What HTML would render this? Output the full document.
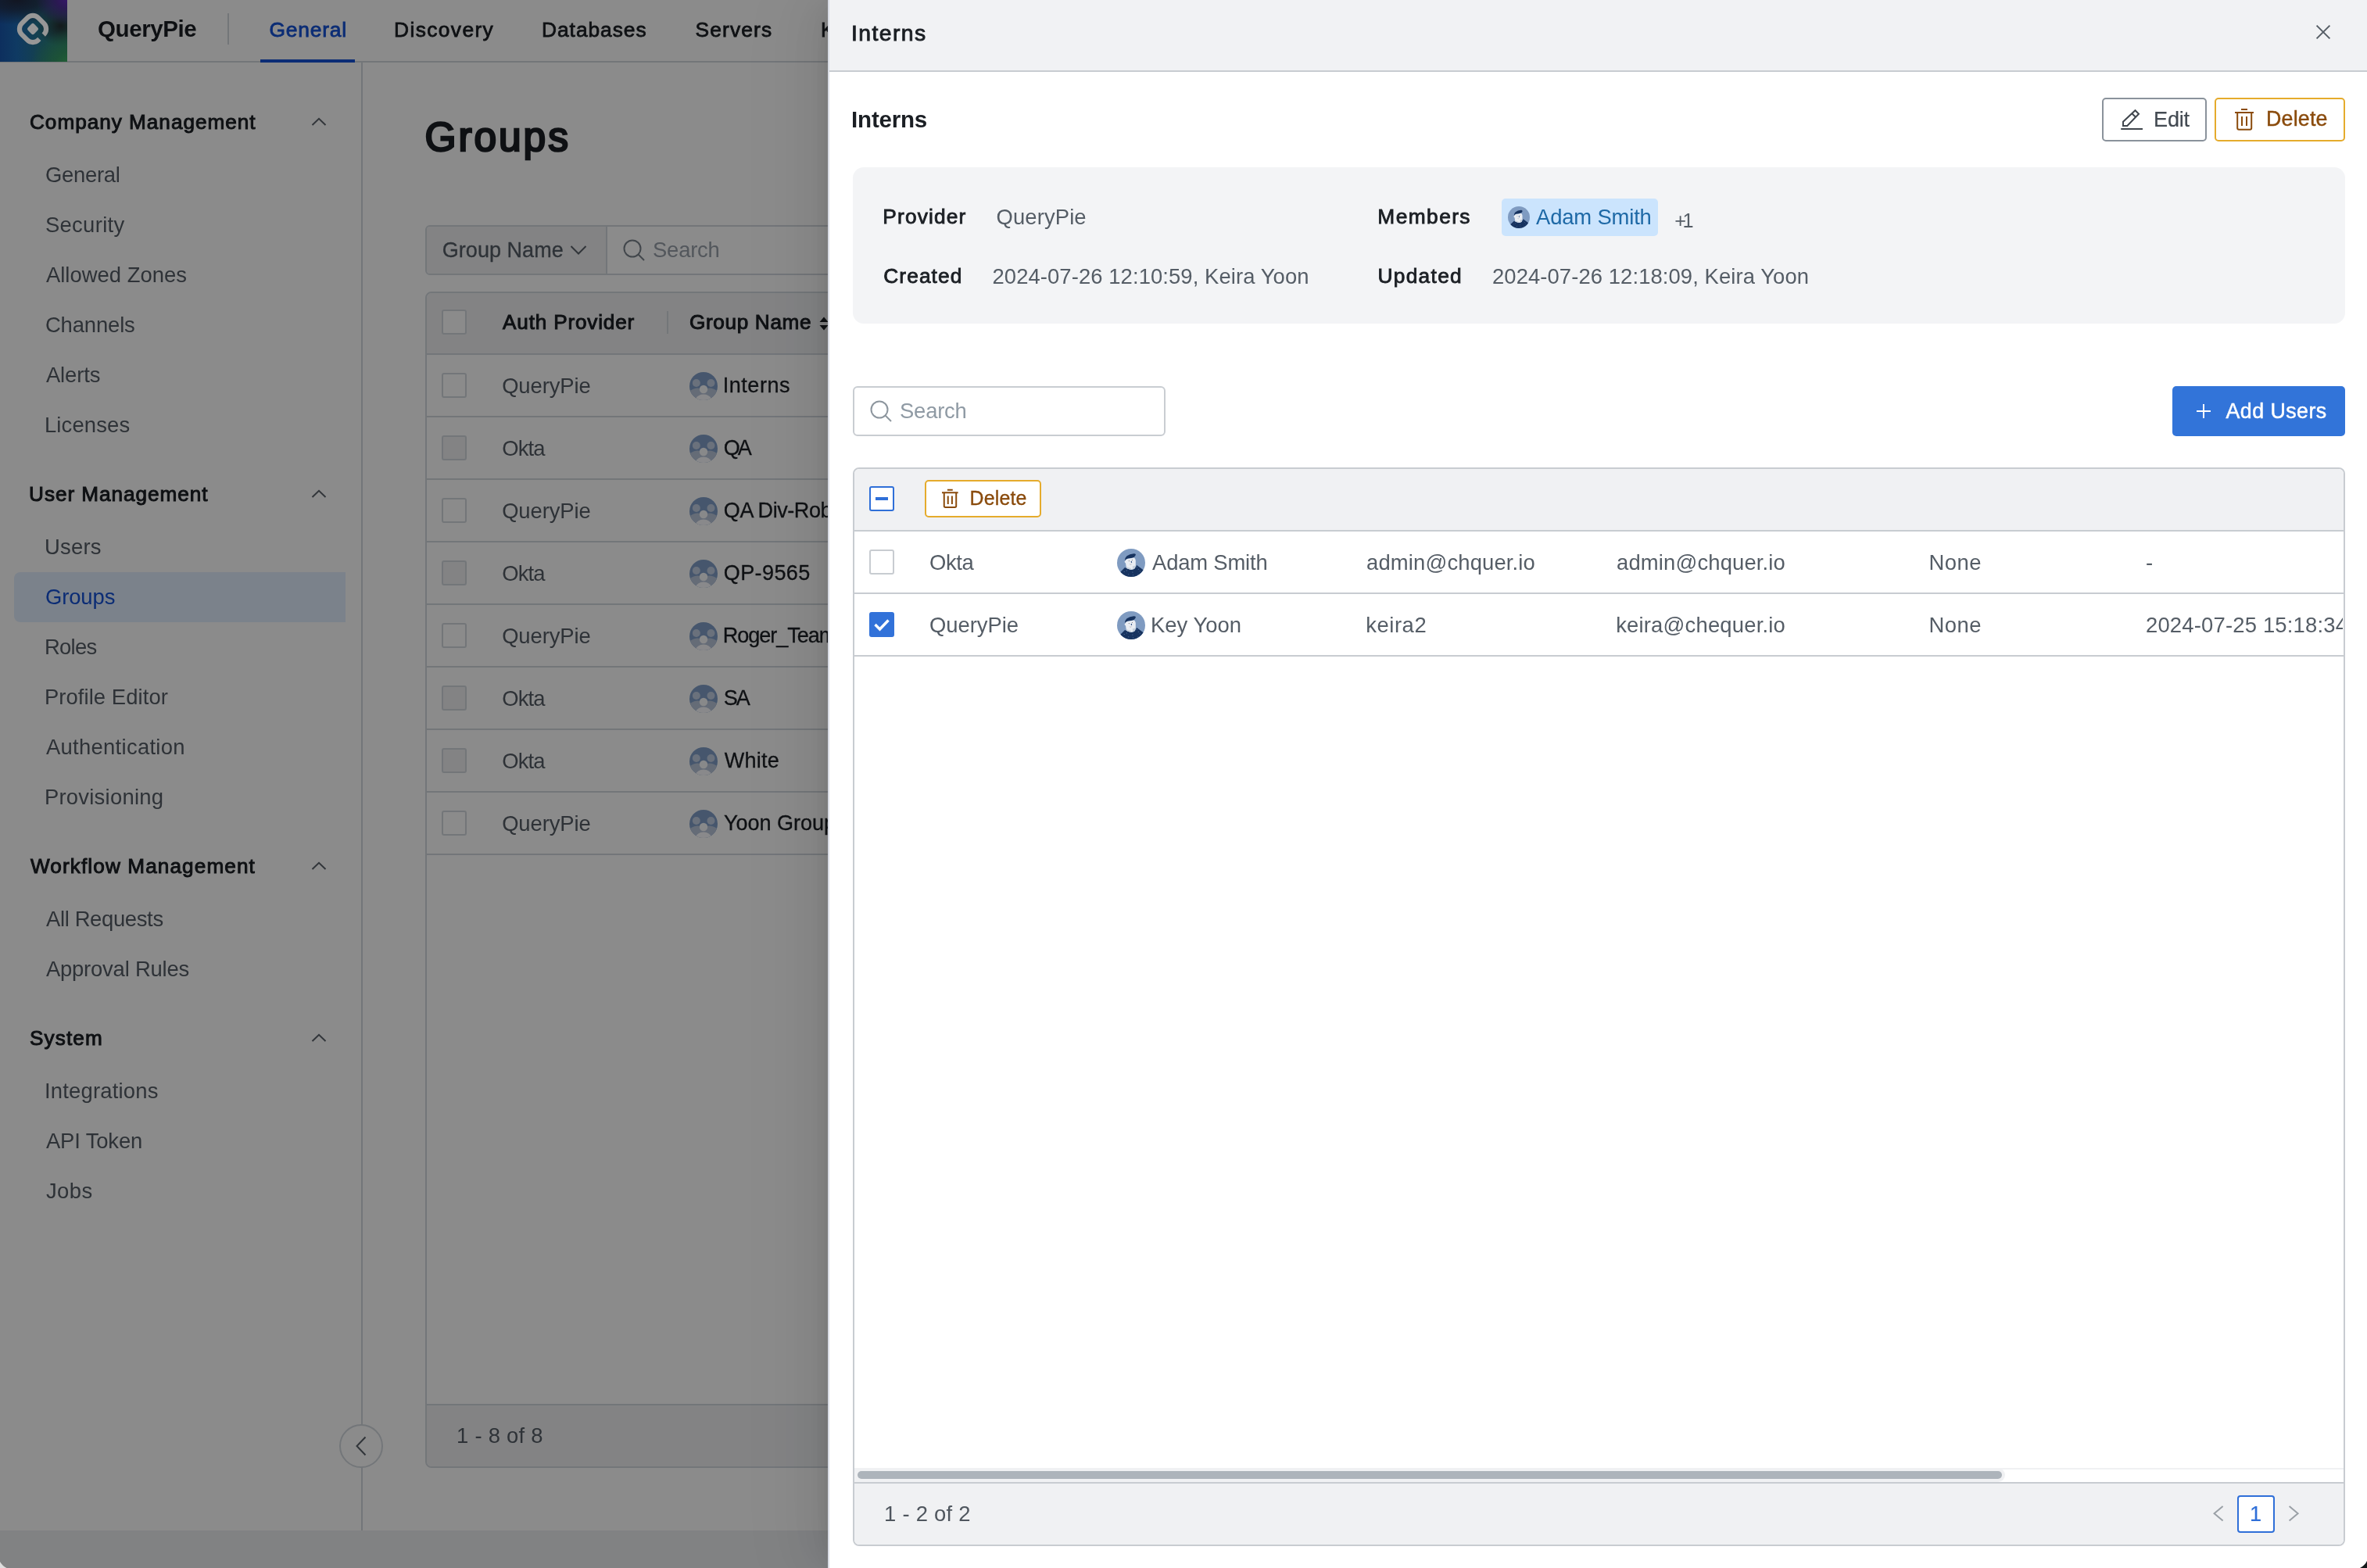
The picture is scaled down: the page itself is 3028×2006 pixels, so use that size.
<!DOCTYPE html>
<html><head><meta charset="utf-8"><title>QueryPie - Groups</title>
<style>
html,body{margin:0;padding:0;}
body{width:3028px;height:2006px;background:#fff;font-family:"Liberation Sans", sans-serif;}
#root{position:relative;width:3028px;height:2006px;overflow:hidden;background:#fff;}
.t{position:absolute;white-space:nowrap;line-height:40px;height:40px;font-family:"Liberation Sans", sans-serif;-webkit-font-smoothing:antialiased;}
#page,#drawer .in{will-change:transform;}
#page{position:absolute;left:0;top:0;width:3028px;height:2006px;overflow:hidden;background:#fff;}
#mask{position:absolute;left:0;top:0;width:3028px;height:2006px;background:rgba(0,0,0,0.455);}
#drawer{position:absolute;left:1060px;top:0;width:1968px;height:2006px;background:#fff;overflow:hidden;box-shadow:-10px 0 30px -14px rgba(0,0,0,.12), -18px 0 56px 0 rgba(0,0,0,.07), -24px 0 96px 32px rgba(0,0,0,.04);}
#drawer .in{position:absolute;left:-1060px;top:0;width:3028px;height:2006px;}
svg{position:absolute;overflow:visible;}
</style></head><body>
<div id="root">
<div id="page">
<div style="position:absolute;left:0px;top:78px;width:3028px;height:2px;background:#d3d9df"></div>
<div style="position:absolute;left:291px;top:17px;width:2px;height:40px;background:#d3d9df"></div>
<div style="position:absolute;left:333px;top:76px;width:121px;height:4px;background:#1552d6"></div>
<div style="position:absolute;left:462px;top:80px;width:2px;height:1878px;background:#d3d9df"></div>
<svg style="left:397.5px;top:150px" width="20" height="12" viewBox="0 0 20 12"><path d="M1.5 10 L10 1.8 L18.5 10" fill="none" stroke="#5a616a" stroke-width="2"/></svg>
<svg style="left:397.5px;top:626px" width="20" height="12" viewBox="0 0 20 12"><path d="M1.5 10 L10 1.8 L18.5 10" fill="none" stroke="#5a616a" stroke-width="2"/></svg>
<div style="position:absolute;left:18px;top:732.0px;width:424px;height:64px;background:#e2eeff;border-radius:8px 0 0 8px"></div>
<svg style="left:397.5px;top:1102px" width="20" height="12" viewBox="0 0 20 12"><path d="M1.5 10 L10 1.8 L18.5 10" fill="none" stroke="#5a616a" stroke-width="2"/></svg>
<svg style="left:397.5px;top:1322px" width="20" height="12" viewBox="0 0 20 12"><path d="M1.5 10 L10 1.8 L18.5 10" fill="none" stroke="#5a616a" stroke-width="2"/></svg>
<div style="position:absolute;left:544px;top:288px;width:2600px;height:64px;border:2px solid #d3d9df;border-radius:6px;box-sizing:border-box;background:#fff"></div>
<div style="position:absolute;left:546px;top:290px;width:229px;height:60px;background:#f0f1f3;border-right:2px solid #d3d9df;border-radius:4px 0 0 4px"></div>
<svg style="left:729.3px;top:313px" width="22" height="14" viewBox="0 0 22 14"><path d="M1.5 2 L11 11.5 L20.5 2" fill="none" stroke="#5a616a" stroke-width="2"/></svg>
<svg style="left:796px;top:305px" width="30" height="30" viewBox="0 0 30 30"><circle cx="13" cy="13" r="10.5" fill="none" stroke="#7a828b" stroke-width="2"/><path d="M20.5 20.5 L28 28" stroke="#7a828b" stroke-width="2" fill="none"/></svg>
<div style="position:absolute;left:544px;top:373px;width:2600px;height:1505px;border:2px solid #d3d9df;border-radius:8px;box-sizing:border-box;background:#fff"></div>
<div style="position:absolute;left:546px;top:375px;width:2600px;height:77px;background:#f0f1f3;border-radius:6px 0 0 0"></div>
<div style="position:absolute;left:546px;top:452px;width:2600px;height:2px;background:#d3d9df"></div>
<div style="position:absolute;left:565px;top:396px;width:32px;height:32px;box-sizing:border-box;border:2px solid #d3d9df;border-radius:3px;background:#fff"></div>
<div style="position:absolute;left:853px;top:398px;width:2px;height:29px;background:#d3d9df"></div>
<svg style="left:1048px;top:405px" width="12" height="18" viewBox="0 0 12 18"><path d="M6 0.5 L11.5 7 L0.5 7 Z M0.5 11 L11.5 11 L6 17.5 Z" fill="#1b1f24"/></svg>
<div style="position:absolute;left:546px;top:532px;width:2600px;height:2px;background:#d3d9df"></div>
<div style="position:absolute;left:565px;top:477px;width:32px;height:32px;box-sizing:border-box;border:2px solid #d3d9df;border-radius:3px;background:#fff"></div>
<svg style="left:882px;top:476px" width="36" height="36" viewBox="0 0 36 36"><defs><clipPath id="gc"><circle cx="18" cy="18" r="18"/></clipPath></defs><g clip-path="url(#gc)"><rect width="36" height="36" fill="#809fc8"/><circle cx="8.8" cy="14" r="5" fill="#c2cfe4"/><circle cx="27.5" cy="14" r="5" fill="#c2cfe4"/><path d="M-2 36 L-2 26 Q9 17 18 23 Q27 17 38 26 L38 36 Z" fill="#bac6da"/><circle cx="18" cy="22" r="5.2" fill="#fafbfe"/><path d="M7 36 Q10 28.5 18 28.5 Q26 28.5 29 36 Z" fill="#fbfcff"/></g></svg>
<div style="position:absolute;left:546px;top:612px;width:2600px;height:2px;background:#d3d9df"></div>
<div style="position:absolute;left:565px;top:557px;width:32px;height:32px;box-sizing:border-box;border:2px solid #d3d9df;border-radius:3px;background:#f0f1f3"></div>
<svg style="left:882px;top:556px" width="36" height="36" viewBox="0 0 36 36"><defs><clipPath id="gc"><circle cx="18" cy="18" r="18"/></clipPath></defs><g clip-path="url(#gc)"><rect width="36" height="36" fill="#809fc8"/><circle cx="8.8" cy="14" r="5" fill="#c2cfe4"/><circle cx="27.5" cy="14" r="5" fill="#c2cfe4"/><path d="M-2 36 L-2 26 Q9 17 18 23 Q27 17 38 26 L38 36 Z" fill="#bac6da"/><circle cx="18" cy="22" r="5.2" fill="#fafbfe"/><path d="M7 36 Q10 28.5 18 28.5 Q26 28.5 29 36 Z" fill="#fbfcff"/></g></svg>
<div style="position:absolute;left:546px;top:692px;width:2600px;height:2px;background:#d3d9df"></div>
<div style="position:absolute;left:565px;top:637px;width:32px;height:32px;box-sizing:border-box;border:2px solid #d3d9df;border-radius:3px;background:#fff"></div>
<svg style="left:882px;top:636px" width="36" height="36" viewBox="0 0 36 36"><defs><clipPath id="gc"><circle cx="18" cy="18" r="18"/></clipPath></defs><g clip-path="url(#gc)"><rect width="36" height="36" fill="#809fc8"/><circle cx="8.8" cy="14" r="5" fill="#c2cfe4"/><circle cx="27.5" cy="14" r="5" fill="#c2cfe4"/><path d="M-2 36 L-2 26 Q9 17 18 23 Q27 17 38 26 L38 36 Z" fill="#bac6da"/><circle cx="18" cy="22" r="5.2" fill="#fafbfe"/><path d="M7 36 Q10 28.5 18 28.5 Q26 28.5 29 36 Z" fill="#fbfcff"/></g></svg>
<div style="position:absolute;left:546px;top:772px;width:2600px;height:2px;background:#d3d9df"></div>
<div style="position:absolute;left:565px;top:717px;width:32px;height:32px;box-sizing:border-box;border:2px solid #d3d9df;border-radius:3px;background:#f0f1f3"></div>
<svg style="left:882px;top:716px" width="36" height="36" viewBox="0 0 36 36"><defs><clipPath id="gc"><circle cx="18" cy="18" r="18"/></clipPath></defs><g clip-path="url(#gc)"><rect width="36" height="36" fill="#809fc8"/><circle cx="8.8" cy="14" r="5" fill="#c2cfe4"/><circle cx="27.5" cy="14" r="5" fill="#c2cfe4"/><path d="M-2 36 L-2 26 Q9 17 18 23 Q27 17 38 26 L38 36 Z" fill="#bac6da"/><circle cx="18" cy="22" r="5.2" fill="#fafbfe"/><path d="M7 36 Q10 28.5 18 28.5 Q26 28.5 29 36 Z" fill="#fbfcff"/></g></svg>
<div style="position:absolute;left:546px;top:852px;width:2600px;height:2px;background:#d3d9df"></div>
<div style="position:absolute;left:565px;top:797px;width:32px;height:32px;box-sizing:border-box;border:2px solid #d3d9df;border-radius:3px;background:#fff"></div>
<svg style="left:882px;top:796px" width="36" height="36" viewBox="0 0 36 36"><defs><clipPath id="gc"><circle cx="18" cy="18" r="18"/></clipPath></defs><g clip-path="url(#gc)"><rect width="36" height="36" fill="#809fc8"/><circle cx="8.8" cy="14" r="5" fill="#c2cfe4"/><circle cx="27.5" cy="14" r="5" fill="#c2cfe4"/><path d="M-2 36 L-2 26 Q9 17 18 23 Q27 17 38 26 L38 36 Z" fill="#bac6da"/><circle cx="18" cy="22" r="5.2" fill="#fafbfe"/><path d="M7 36 Q10 28.5 18 28.5 Q26 28.5 29 36 Z" fill="#fbfcff"/></g></svg>
<div style="position:absolute;left:546px;top:932px;width:2600px;height:2px;background:#d3d9df"></div>
<div style="position:absolute;left:565px;top:877px;width:32px;height:32px;box-sizing:border-box;border:2px solid #d3d9df;border-radius:3px;background:#f0f1f3"></div>
<svg style="left:882px;top:876px" width="36" height="36" viewBox="0 0 36 36"><defs><clipPath id="gc"><circle cx="18" cy="18" r="18"/></clipPath></defs><g clip-path="url(#gc)"><rect width="36" height="36" fill="#809fc8"/><circle cx="8.8" cy="14" r="5" fill="#c2cfe4"/><circle cx="27.5" cy="14" r="5" fill="#c2cfe4"/><path d="M-2 36 L-2 26 Q9 17 18 23 Q27 17 38 26 L38 36 Z" fill="#bac6da"/><circle cx="18" cy="22" r="5.2" fill="#fafbfe"/><path d="M7 36 Q10 28.5 18 28.5 Q26 28.5 29 36 Z" fill="#fbfcff"/></g></svg>
<div style="position:absolute;left:546px;top:1012px;width:2600px;height:2px;background:#d3d9df"></div>
<div style="position:absolute;left:565px;top:957px;width:32px;height:32px;box-sizing:border-box;border:2px solid #d3d9df;border-radius:3px;background:#f0f1f3"></div>
<svg style="left:882px;top:956px" width="36" height="36" viewBox="0 0 36 36"><defs><clipPath id="gc"><circle cx="18" cy="18" r="18"/></clipPath></defs><g clip-path="url(#gc)"><rect width="36" height="36" fill="#809fc8"/><circle cx="8.8" cy="14" r="5" fill="#c2cfe4"/><circle cx="27.5" cy="14" r="5" fill="#c2cfe4"/><path d="M-2 36 L-2 26 Q9 17 18 23 Q27 17 38 26 L38 36 Z" fill="#bac6da"/><circle cx="18" cy="22" r="5.2" fill="#fafbfe"/><path d="M7 36 Q10 28.5 18 28.5 Q26 28.5 29 36 Z" fill="#fbfcff"/></g></svg>
<div style="position:absolute;left:546px;top:1092px;width:2600px;height:2px;background:#d3d9df"></div>
<div style="position:absolute;left:565px;top:1037px;width:32px;height:32px;box-sizing:border-box;border:2px solid #d3d9df;border-radius:3px;background:#fff"></div>
<svg style="left:882px;top:1036px" width="36" height="36" viewBox="0 0 36 36"><defs><clipPath id="gc"><circle cx="18" cy="18" r="18"/></clipPath></defs><g clip-path="url(#gc)"><rect width="36" height="36" fill="#809fc8"/><circle cx="8.8" cy="14" r="5" fill="#c2cfe4"/><circle cx="27.5" cy="14" r="5" fill="#c2cfe4"/><path d="M-2 36 L-2 26 Q9 17 18 23 Q27 17 38 26 L38 36 Z" fill="#bac6da"/><circle cx="18" cy="22" r="5.2" fill="#fafbfe"/><path d="M7 36 Q10 28.5 18 28.5 Q26 28.5 29 36 Z" fill="#fbfcff"/></g></svg>
<div style="position:absolute;left:546px;top:1796px;width:2600px;height:2px;background:#d3d9df"></div>
<div style="position:absolute;left:546px;top:1798px;width:2600px;height:78px;background:#f0f1f3;border-radius:0 0 0 6px"></div>
<div style="position:absolute;left:434px;top:1822px;width:56px;height:56px;box-sizing:border-box;border:2px solid #d3d9df;border-radius:28px;background:#fff"></div>
<svg style="left:454px;top:1837px" width="16" height="26" viewBox="0 0 16 26"><path d="M13.5 1.5 L2.5 13 L13.5 24.5" fill="none" stroke="#5a616a" stroke-width="2"/></svg>
<div style="position:absolute;left:0px;top:1958px;width:3028px;height:48px;background:#eceef1"></div>
<div class="t" style="left:125.04px;top:17px;font-size:29.54px;font-weight:700;color:#1b1f24;letter-spacing:-0.438px;">QueryPie</div>
<div class="t" style="left:344.51px;top:18px;font-size:26.39px;font-weight:400;color:#1552d6;letter-spacing:0.793px;-webkit-text-stroke:0.8px #1552d6;">General</div>
<div class="t" style="left:504.06px;top:18px;font-size:26.39px;font-weight:400;color:#1b1f24;letter-spacing:1.366px;-webkit-text-stroke:0.8px #1b1f24;">Discovery</div>
<div class="t" style="left:693.06px;top:18px;font-size:26.39px;font-weight:400;color:#1b1f24;letter-spacing:0.930px;-webkit-text-stroke:0.8px #1b1f24;">Databases</div>
<div class="t" style="left:889.51px;top:18px;font-size:26.39px;font-weight:400;color:#1b1f24;letter-spacing:1.142px;-webkit-text-stroke:0.8px #1b1f24;">Servers</div>
<div class="t" style="left:1050.06px;top:18px;font-size:26.39px;font-weight:400;color:#1b1f24;letter-spacing:0.350px;-webkit-text-stroke:0.8px #1b1f24;">Kubernetes</div>
<div class="t" style="left:38.01px;top:136px;font-size:26.13px;font-weight:400;color:#1b1f24;letter-spacing:0.999px;-webkit-text-stroke:1.0px #1b1f24;">Company Management</div>
<div class="t" style="left:57.91px;top:204px;font-size:27.43px;font-weight:400;color:#555d66;letter-spacing:-0.263px;">General</div>
<div class="t" style="left:57.91px;top:268px;font-size:27.43px;font-weight:400;color:#555d66;letter-spacing:0.318px;">Security</div>
<div class="t" style="left:58.94px;top:332px;font-size:27.43px;font-weight:400;color:#555d66;letter-spacing:0.010px;">Allowed Zones</div>
<div class="t" style="left:57.91px;top:396px;font-size:27.43px;font-weight:400;color:#555d66;letter-spacing:-0.136px;">Channels</div>
<div class="t" style="left:58.94px;top:460px;font-size:27.43px;font-weight:400;color:#555d66;letter-spacing:-0.107px;">Alerts</div>
<div class="t" style="left:56.94px;top:524px;font-size:27.43px;font-weight:400;color:#555d66;letter-spacing:0.152px;">Licenses</div>
<div class="t" style="left:37.09px;top:612px;font-size:26.13px;font-weight:400;color:#1b1f24;letter-spacing:0.967px;-webkit-text-stroke:1.0px #1b1f24;">User Management</div>
<div class="t" style="left:56.97px;top:680px;font-size:27.43px;font-weight:400;color:#555d66;letter-spacing:0.245px;">Users</div>
<div class="t" style="left:57.91px;top:744px;font-size:27.43px;font-weight:400;color:#1552d6;letter-spacing:-0.091px;">Groups</div>
<div class="t" style="left:56.94px;top:808px;font-size:27.43px;font-weight:400;color:#555d66;letter-spacing:-0.734px;">Roles</div>
<div class="t" style="left:56.94px;top:872px;font-size:27.43px;font-weight:400;color:#555d66;letter-spacing:0.074px;">Profile Editor</div>
<div class="t" style="left:58.94px;top:936px;font-size:27.43px;font-weight:400;color:#555d66;letter-spacing:0.294px;">Authentication</div>
<div class="t" style="left:56.94px;top:1000px;font-size:27.43px;font-weight:400;color:#555d66;letter-spacing:0.242px;">Provisioning</div>
<div class="t" style="left:39.04px;top:1088px;font-size:26.13px;font-weight:400;color:#1b1f24;letter-spacing:1.119px;-webkit-text-stroke:1.0px #1b1f24;">Workflow Management</div>
<div class="t" style="left:58.94px;top:1156px;font-size:27.43px;font-weight:400;color:#555d66;letter-spacing:-0.343px;">All Requests</div>
<div class="t" style="left:58.94px;top:1220px;font-size:27.43px;font-weight:400;color:#555d66;letter-spacing:-0.206px;">Approval Rules</div>
<div class="t" style="left:38.01px;top:1308px;font-size:26.13px;font-weight:400;color:#1b1f24;letter-spacing:1.118px;-webkit-text-stroke:1.0px #1b1f24;">System</div>
<div class="t" style="left:56.90px;top:1376px;font-size:27.43px;font-weight:400;color:#555d66;letter-spacing:0.209px;">Integrations</div>
<div class="t" style="left:58.94px;top:1440px;font-size:27.43px;font-weight:400;color:#555d66;letter-spacing:-0.149px;">API Token</div>
<div class="t" style="left:58.90px;top:1504px;font-size:27.43px;font-weight:400;color:#555d66;letter-spacing:0.452px;">Jobs</div>
<div class="t" style="left:543.60px;top:155px;font-size:51.48px;font-weight:400;color:#1b1f24;letter-spacing:2.900px;-webkit-text-stroke:2.6px #1b1f24;">Groups</div>
<div class="t" style="left:565.81px;top:300px;font-size:27.04px;font-weight:400;color:#555d66;letter-spacing:0.019px;-webkit-text-stroke:0.3px #555d66;">Group Name</div>
<div class="t" style="left:835.01px;top:300px;font-size:27.43px;font-weight:400;color:#98a0aa;letter-spacing:-0.202px;">Search</div>
<div class="t" style="left:643.04px;top:392px;font-size:26.13px;font-weight:400;color:#1b1f24;letter-spacing:0.825px;-webkit-text-stroke:1.0px #1b1f24;">Auth Provider</div>
<div class="t" style="left:882.01px;top:392px;font-size:26.13px;font-weight:400;color:#1b1f24;letter-spacing:0.665px;-webkit-text-stroke:1.0px #1b1f24;">Group Name</div>
<div class="t" style="left:642.13px;top:474px;font-size:27.43px;font-weight:400;color:#555d66;letter-spacing:-0.088px;">QueryPie</div>
<div class="t" style="left:924.80px;top:473px;font-size:27.04px;font-weight:400;color:#1b1f24;letter-spacing:0.498px;-webkit-text-stroke:0.3px #1b1f24;">Interns</div>
<div class="t" style="left:642.13px;top:554px;font-size:27.43px;font-weight:400;color:#555d66;letter-spacing:-0.824px;">Okta</div>
<div class="t" style="left:925.83px;top:553px;font-size:27.04px;font-weight:400;color:#1b1f24;letter-spacing:-3.206px;-webkit-text-stroke:0.3px #1b1f24;">QA</div>
<div class="t" style="left:642.13px;top:634px;font-size:27.43px;font-weight:400;color:#555d66;letter-spacing:-0.088px;">QueryPie</div>
<div class="t" style="left:925.83px;top:633px;font-size:27.04px;font-weight:400;color:#1b1f24;letter-spacing:-0.445px;-webkit-text-stroke:0.3px #1b1f24;">QA Div-Robert</div>
<div class="t" style="left:642.13px;top:714px;font-size:27.43px;font-weight:400;color:#555d66;letter-spacing:-0.824px;">Okta</div>
<div class="t" style="left:925.83px;top:713px;font-size:27.04px;font-weight:400;color:#1b1f24;letter-spacing:0.369px;-webkit-text-stroke:0.3px #1b1f24;">QP-9565</div>
<div class="t" style="left:642.13px;top:794px;font-size:27.43px;font-weight:400;color:#555d66;letter-spacing:-0.088px;">QueryPie</div>
<div class="t" style="left:924.84px;top:793px;font-size:27.04px;font-weight:400;color:#1b1f24;letter-spacing:-1.042px;-webkit-text-stroke:0.3px #1b1f24;">Roger_Team</div>
<div class="t" style="left:642.13px;top:874px;font-size:27.43px;font-weight:400;color:#555d66;letter-spacing:-0.824px;">Okta</div>
<div class="t" style="left:925.81px;top:873px;font-size:27.04px;font-weight:400;color:#1b1f24;letter-spacing:-2.082px;-webkit-text-stroke:0.3px #1b1f24;">SA</div>
<div class="t" style="left:642.13px;top:954px;font-size:27.43px;font-weight:400;color:#555d66;letter-spacing:-0.824px;">Okta</div>
<div class="t" style="left:926.84px;top:953px;font-size:27.04px;font-weight:400;color:#1b1f24;letter-spacing:0.216px;-webkit-text-stroke:0.3px #1b1f24;">White</div>
<div class="t" style="left:642.13px;top:1034px;font-size:27.43px;font-weight:400;color:#555d66;letter-spacing:-0.088px;">QueryPie</div>
<div class="t" style="left:925.97px;top:1033px;font-size:27.04px;font-weight:400;color:#1b1f24;letter-spacing:-0.022px;-webkit-text-stroke:0.3px #1b1f24;">Yoon Group</div>
<div class="t" style="left:584.07px;top:1817px;font-size:27.43px;font-weight:400;color:#555d66;letter-spacing:0.238px;">1 - 8 of 8</div>
</div>
<div id="mask"></div>

<div id="drawer"><div class="in">
<div style="position:absolute;left:1060px;top:0px;width:1968px;height:90px;background:#f1f2f4"></div>
<div style="position:absolute;left:1060px;top:90px;width:1968px;height:2px;background:#c8ccd1"></div>
<svg style="left:2961px;top:30px" width="22" height="22" viewBox="0 0 22 22"><path d="M2.6 2.6 L19.4 19.4 M19.4 2.6 L2.6 19.4" stroke="#565e66" stroke-width="2" fill="none"/></svg>
<div style="position:absolute;left:2689px;top:125px;width:134px;height:56px;box-sizing:border-box;border:2px solid #8a929b;border-radius:5px;background:#fff"></div>
<svg style="left:2713px;top:140px" width="30" height="28" viewBox="0 0 30 28"><g fill="none" stroke="#40464d" stroke-width="2" stroke-linejoin="miter"><path d="M3 21 L3 15.8 L18.5 1.2 L23 5.8 L8.3 21 Z M14.4 5.2 L19 9.8"/><path d="M0.2 25 L28 25"/></g></svg>
<div style="position:absolute;left:2833px;top:125px;width:167px;height:56px;box-sizing:border-box;border:2px solid #e5ab2c;border-radius:5px;background:#fff"></div>
<svg style="left:2859px;top:139px" width="24.0" height="28.0" viewBox="0 0 24 28"><g fill="none" stroke="#8a4b0c" stroke-width="2.0"><path d="M8 1 L16 1 M0 5 L24 5 M3.2 5 L3.2 24.8 Q3.2 26.8 5.2 26.8 L19.2 26.8 Q21.2 26.8 21.2 24.8 L21.2 5 M9 10 L9 22 M15 10 L15 22"/></g></svg>
<div style="position:absolute;left:1091px;top:214px;width:1909px;height:200px;background:#f3f4f6;border-radius:14px"></div>
<div style="position:absolute;left:1921px;top:254px;width:200px;height:48px;background:#cbe4fd;border-radius:5px"></div>
<svg style="left:1929px;top:264px" width="28" height="28" viewBox="0 0 36 36"><defs><clipPath id="uc1943_278"><circle cx="18" cy="18" r="18"/></clipPath></defs><g clip-path="url(#uc1943_278)"><rect width="36" height="36" fill="#7f9bc1"/><path d="M3 31 L10 24 Q13.5 25.8 18 27 Q21 27 23 25 L25.2 21 L35 28.2 L36 36 L0 36 Z" fill="#17335f"/><path d="M10.8 13.5 L21.5 11.2 Q23.6 12.5 23.8 15 L23.8 21.5 L22.8 25 Q20 27 18 26.8 Q14 26.5 12 24.8 L11 18.5 Q9.4 17.6 9.6 16.3 Q10 15.3 10.8 15.5 Z" fill="#e9edf3"/><path d="M12 23.1 Q15 24.6 18 25 L18 26.8 Q14 26.5 12.1 24.8 Z M19.9 22.2 L23.6 21.6 L22.8 25 Q21.4 26.2 19.9 26.6 Z" fill="#c6d0dc"/><path d="M10 15 Q10.3 11 12.5 9.2 Q16 6.8 21.5 6.2 Q23.5 6.2 24 7.6 Q23.5 9.5 21.5 11 Q18 12.2 14.5 12.3 Q12 12.8 11.3 14 Z" fill="#17335f"/><circle cx="15.3" cy="15.6" r="0.55" fill="#6a625f"/><circle cx="19.4" cy="14.4" r="0.5" fill="#6a625f"/><ellipse cx="18.4" cy="16.8" rx="0.65" ry="1.15" transform="rotate(-15 18.4 16.8)" fill="#2a4a80"/><path d="M16 19.6 Q17.2 21.2 18.6 19.4" fill="none" stroke="#a8a4a6" stroke-width="0.6"/><circle cx="9.2" cy="29.5" r="0.55" fill="#5a76a3"/><circle cx="12.3" cy="27.9" r="0.55" fill="#5a76a3"/><circle cx="19.9" cy="30.1" r="0.55" fill="#5a76a3"/><circle cx="14.7" cy="32.8" r="0.55" fill="#5a76a3"/><circle cx="27.3" cy="26.3" r="0.55" fill="#5a76a3"/><circle cx="29.3" cy="28.7" r="0.55" fill="#5a76a3"/><circle cx="26.9" cy="32.7" r="0.55" fill="#5a76a3"/><circle cx="25.3" cy="23.6" r="0.55" fill="#5a76a3"/><circle cx="20.5" cy="33.8" r="0.55" fill="#5a76a3"/></g></svg>
<div style="position:absolute;left:1091px;top:494px;width:400px;height:64px;box-sizing:border-box;border:2px solid #c9cdd2;border-radius:6px;background:#fff"></div>
<svg style="left:1112px;top:511px" width="30" height="30" viewBox="0 0 30 30"><circle cx="13" cy="13" r="10.5" fill="none" stroke="#8d969e" stroke-width="2"/><path d="M20.5 20.5 L28 28" stroke="#8d969e" stroke-width="2" fill="none"/></svg>
<div style="position:absolute;left:2779px;top:494px;width:221px;height:64px;background:#3274d9;border-radius:5px"></div>
<svg style="left:2810px;top:517px" width="18" height="18" viewBox="0 0 18 18"><path d="M9 0 L9 18 M0 9 L18 9" stroke="#fff" stroke-width="2" fill="none"/></svg>
<div style="position:absolute;left:1091px;top:598px;width:1909px;height:1380px;box-sizing:border-box;border:2px solid #c8ccd1;border-radius:8px;background:#fff"></div>
<div style="position:absolute;left:1093px;top:600px;width:1905px;height:78px;background:#f0f1f3;border-radius:6px 6px 0 0"></div>
<div style="position:absolute;left:1093px;top:678px;width:1905px;height:2px;background:#c8ccd1"></div>
<div style="position:absolute;left:1093px;top:758px;width:1905px;height:2px;background:#c8ccd1"></div>
<div style="position:absolute;left:1093px;top:838px;width:1905px;height:2px;background:#c8ccd1"></div>
<div style="position:absolute;left:1112px;top:622px;width:32px;height:32px;box-sizing:border-box;border:2px solid #2f6fd8;border-radius:3px;background:#fff"></div>
<div style="position:absolute;left:1120px;top:636px;width:16px;height:4px;background:#2f6fd8"></div>
<div style="position:absolute;left:1183px;top:614px;width:149px;height:48px;box-sizing:border-box;border:2px solid #e5ab2c;border-radius:5px;background:#fff"></div>
<svg style="left:1204.5px;top:625.5px" width="20.64" height="24.08" viewBox="0 0 24 28"><g fill="none" stroke="#8a4b0c" stroke-width="2.3255813953488373"><path d="M8 1 L16 1 M0 5 L24 5 M3.2 5 L3.2 24.8 Q3.2 26.8 5.2 26.8 L19.2 26.8 Q21.2 26.8 21.2 24.8 L21.2 5 M9 10 L9 22 M15 10 L15 22"/></g></svg>
<div style="position:absolute;left:1112px;top:703px;width:32px;height:32px;box-sizing:border-box;border:2px solid #c8ccd1;border-radius:3px;background:#fff"></div>
<svg style="left:1429px;top:702px" width="36" height="36" viewBox="0 0 36 36"><defs><clipPath id="uc1447_720"><circle cx="18" cy="18" r="18"/></clipPath></defs><g clip-path="url(#uc1447_720)"><rect width="36" height="36" fill="#7f9bc1"/><path d="M3 31 L10 24 Q13.5 25.8 18 27 Q21 27 23 25 L25.2 21 L35 28.2 L36 36 L0 36 Z" fill="#17335f"/><path d="M10.8 13.5 L21.5 11.2 Q23.6 12.5 23.8 15 L23.8 21.5 L22.8 25 Q20 27 18 26.8 Q14 26.5 12 24.8 L11 18.5 Q9.4 17.6 9.6 16.3 Q10 15.3 10.8 15.5 Z" fill="#e9edf3"/><path d="M12 23.1 Q15 24.6 18 25 L18 26.8 Q14 26.5 12.1 24.8 Z M19.9 22.2 L23.6 21.6 L22.8 25 Q21.4 26.2 19.9 26.6 Z" fill="#c6d0dc"/><path d="M10 15 Q10.3 11 12.5 9.2 Q16 6.8 21.5 6.2 Q23.5 6.2 24 7.6 Q23.5 9.5 21.5 11 Q18 12.2 14.5 12.3 Q12 12.8 11.3 14 Z" fill="#17335f"/><circle cx="15.3" cy="15.6" r="0.55" fill="#6a625f"/><circle cx="19.4" cy="14.4" r="0.5" fill="#6a625f"/><ellipse cx="18.4" cy="16.8" rx="0.65" ry="1.15" transform="rotate(-15 18.4 16.8)" fill="#2a4a80"/><path d="M16 19.6 Q17.2 21.2 18.6 19.4" fill="none" stroke="#a8a4a6" stroke-width="0.6"/><circle cx="9.2" cy="29.5" r="0.55" fill="#5a76a3"/><circle cx="12.3" cy="27.9" r="0.55" fill="#5a76a3"/><circle cx="19.9" cy="30.1" r="0.55" fill="#5a76a3"/><circle cx="14.7" cy="32.8" r="0.55" fill="#5a76a3"/><circle cx="27.3" cy="26.3" r="0.55" fill="#5a76a3"/><circle cx="29.3" cy="28.7" r="0.55" fill="#5a76a3"/><circle cx="26.9" cy="32.7" r="0.55" fill="#5a76a3"/><circle cx="25.3" cy="23.6" r="0.55" fill="#5a76a3"/><circle cx="20.5" cy="33.8" r="0.55" fill="#5a76a3"/></g></svg>
<div style="position:absolute;left:1112px;top:783px;width:32px;height:32px;background:#3272d9;border-radius:3px"></div>
<svg style="left:1112px;top:783px" width="32" height="32" viewBox="0 0 32 32"><path d="M7.5 16 L13.5 22 L24.5 10.5" fill="none" stroke="#fff" stroke-width="3.4"/></svg>
<svg style="left:1429px;top:782px" width="36" height="36" viewBox="0 0 36 36"><defs><clipPath id="uc1447_800"><circle cx="18" cy="18" r="18"/></clipPath></defs><g clip-path="url(#uc1447_800)"><rect width="36" height="36" fill="#7f9bc1"/><path d="M3 31 L10 24 Q13.5 25.8 18 27 Q21 27 23 25 L25.2 21 L35 28.2 L36 36 L0 36 Z" fill="#17335f"/><path d="M10.8 13.5 L21.5 11.2 Q23.6 12.5 23.8 15 L23.8 21.5 L22.8 25 Q20 27 18 26.8 Q14 26.5 12 24.8 L11 18.5 Q9.4 17.6 9.6 16.3 Q10 15.3 10.8 15.5 Z" fill="#e9edf3"/><path d="M12 23.1 Q15 24.6 18 25 L18 26.8 Q14 26.5 12.1 24.8 Z M19.9 22.2 L23.6 21.6 L22.8 25 Q21.4 26.2 19.9 26.6 Z" fill="#c6d0dc"/><path d="M10 15 Q10.3 11 12.5 9.2 Q16 6.8 21.5 6.2 Q23.5 6.2 24 7.6 Q23.5 9.5 21.5 11 Q18 12.2 14.5 12.3 Q12 12.8 11.3 14 Z" fill="#17335f"/><circle cx="15.3" cy="15.6" r="0.55" fill="#6a625f"/><circle cx="19.4" cy="14.4" r="0.5" fill="#6a625f"/><ellipse cx="18.4" cy="16.8" rx="0.65" ry="1.15" transform="rotate(-15 18.4 16.8)" fill="#2a4a80"/><path d="M16 19.6 Q17.2 21.2 18.6 19.4" fill="none" stroke="#a8a4a6" stroke-width="0.6"/><circle cx="9.2" cy="29.5" r="0.55" fill="#5a76a3"/><circle cx="12.3" cy="27.9" r="0.55" fill="#5a76a3"/><circle cx="19.9" cy="30.1" r="0.55" fill="#5a76a3"/><circle cx="14.7" cy="32.8" r="0.55" fill="#5a76a3"/><circle cx="27.3" cy="26.3" r="0.55" fill="#5a76a3"/><circle cx="29.3" cy="28.7" r="0.55" fill="#5a76a3"/><circle cx="26.9" cy="32.7" r="0.55" fill="#5a76a3"/><circle cx="25.3" cy="23.6" r="0.55" fill="#5a76a3"/><circle cx="20.5" cy="33.8" r="0.55" fill="#5a76a3"/></g></svg>
<div style="position:absolute;left:1093px;top:1878px;width:1905px;height:2px;background:#f0f1f3"></div>
<div style="position:absolute;left:1093px;top:1878px;width:1472px;height:18px;background:#f0f1f3;border-radius:0 9px 9px 0"></div>
<div style="position:absolute;left:1097px;top:1882px;width:1464px;height:10px;background:#adb4bb;border-radius:5px"></div>
<div style="position:absolute;left:1093px;top:1896px;width:1905px;height:2px;background:#c8ccd1"></div>
<div style="position:absolute;left:1093px;top:1898px;width:1905px;height:78px;background:#f0f1f3;border-radius:0 0 6px 6px"></div>
<svg style="left:2830px;top:1925px" width="16" height="24" viewBox="0 0 16 24"><path d="M13.6 2.0 L2.6 11.2 L13.6 20.4" fill="none" stroke="#9aa0a6" stroke-width="2"/></svg>
<div style="position:absolute;left:2862px;top:1913px;width:48px;height:48px;box-sizing:border-box;border:2px solid #2f6fd8;border-radius:4px;background:#fff"></div>
<svg style="left:2927px;top:1925px" width="16" height="24" viewBox="0 0 16 24"><path d="M1.6 2.0 L12.6 11.2 L1.6 20.4" fill="none" stroke="#9aa0a6" stroke-width="2"/></svg>
<div class="t" style="left:1089.00px;top:22px;font-size:28.37px;font-weight:400;color:#1b1f24;letter-spacing:1.411px;-webkit-text-stroke:0.9px #1b1f24;">Interns</div>
<div class="t" style="left:1089.12px;top:133px;font-size:29.54px;font-weight:700;color:#1b1f24;letter-spacing:-0.235px;">Interns</div>
<div class="t" style="left:2755.04px;top:133px;font-size:27.17px;font-weight:400;color:#434a52;letter-spacing:-0.254px;-webkit-text-stroke:0.2px #434a52;">Edit</div>
<div class="t" style="left:2899.04px;top:132px;font-size:26.84px;font-weight:400;color:#8a4b0c;letter-spacing:0.191px;-webkit-text-stroke:0.45px #8a4b0c;">Delete</div>
<div class="t" style="left:1129.36px;top:257px;font-size:26.32px;font-weight:400;color:#1b1f24;letter-spacing:1.117px;-webkit-text-stroke:0.85px #1b1f24;">Provider</div>
<div class="t" style="left:1274.53px;top:258px;font-size:27.43px;font-weight:400;color:#555d66;letter-spacing:0.112px;">QueryPie</div>
<div class="t" style="left:1762.36px;top:257px;font-size:26.32px;font-weight:400;color:#1b1f24;letter-spacing:1.418px;-webkit-text-stroke:0.85px #1b1f24;">Members</div>
<div class="t" style="left:1965.04px;top:258px;font-size:27.43px;font-weight:400;color:#1e69a6;letter-spacing:-0.171px;">Adam Smith</div>
<div class="t" style="left:2142.24px;top:262px;font-size:25.32px;font-weight:400;color:#555d66;letter-spacing:-4.563px;">+1</div>
<div class="t" style="left:1130.31px;top:333px;font-size:26.32px;font-weight:400;color:#1b1f24;letter-spacing:1.061px;-webkit-text-stroke:0.85px #1b1f24;">Created</div>
<div class="t" style="left:1269.51px;top:334px;font-size:27.43px;font-weight:400;color:#555d66;letter-spacing:0.081px;">2024-07-26 12:10:59, Keira Yoon</div>
<div class="t" style="left:1762.39px;top:333px;font-size:26.32px;font-weight:400;color:#1b1f24;letter-spacing:1.314px;-webkit-text-stroke:0.85px #1b1f24;">Updated</div>
<div class="t" style="left:1909.01px;top:334px;font-size:27.43px;font-weight:400;color:#555d66;letter-spacing:0.081px;">2024-07-26 12:18:09, Keira Yoon</div>
<div class="t" style="left:1151.01px;top:506px;font-size:27.43px;font-weight:400;color:#8f9aa4;letter-spacing:-0.202px;">Search</div>
<div class="t" style="left:2847.54px;top:506px;font-size:26.78px;font-weight:400;color:#fff;letter-spacing:0.456px;-webkit-text-stroke:0.5px #fff;">Add Users</div>
<div class="t" style="left:1240.59px;top:617px;font-size:24.87px;font-weight:400;color:#8a4b0c;letter-spacing:0.171px;-webkit-text-stroke:0.35px #8a4b0c;">Delete</div>
<div class="t" style="left:1189.03px;top:700px;font-size:27.43px;font-weight:400;color:#555d66;letter-spacing:-0.391px;">Okta</div>
<div class="t" style="left:1474.04px;top:700px;font-size:27.43px;font-weight:400;color:#555d66;letter-spacing:-0.194px;">Adam Smith</div>
<div class="t" style="left:1748.04px;top:700px;font-size:27.43px;font-weight:400;color:#555d66;letter-spacing:0.139px;">admin@chquer.io</div>
<div class="t" style="left:2068.04px;top:700px;font-size:27.43px;font-weight:400;color:#555d66;letter-spacing:0.139px;">admin@chquer.io</div>
<div class="t" style="left:2467.54px;top:700px;font-size:27.43px;font-weight:400;color:#555d66;letter-spacing:0.488px;">None</div>
<div class="t" style="left:2745.04px;top:700px;font-size:27.43px;font-weight:400;color:#555d66;letter-spacing:0.350px;">-</div>
<div class="t" style="left:1189.03px;top:780px;font-size:27.43px;font-weight:400;color:#555d66;letter-spacing:-0.031px;">QueryPie</div>
<div class="t" style="left:1472.04px;top:780px;font-size:27.43px;font-weight:400;color:#555d66;letter-spacing:-0.005px;">Key Yoon</div>
<div class="t" style="left:1747.20px;top:780px;font-size:27.43px;font-weight:400;color:#555d66;letter-spacing:0.558px;">keira2</div>
<div class="t" style="left:2067.20px;top:780px;font-size:27.43px;font-weight:400;color:#555d66;letter-spacing:0.185px;">keira@chequer.io</div>
<div class="t" style="left:2467.54px;top:780px;font-size:27.43px;font-weight:400;color:#555d66;letter-spacing:0.488px;">None</div>
<div class="t" style="left:2745.01px;top:780px;font-size:27.43px;font-weight:400;color:#555d66;letter-spacing:0.186px;width:251.99px;overflow:hidden;">2024-07-25 15:18:34</div>
<div class="t" style="left:1131.07px;top:1917px;font-size:27.43px;font-weight:400;color:#4f565e;letter-spacing:0.257px;">1 - 2 of 2</div>
<div class="t" style="left:2878.09px;top:1917px;font-size:27.23px;font-weight:400;color:#2f6fd8;letter-spacing:0.350px;-webkit-text-stroke:0.15px #2f6fd8;">1</div>
</div></div>
<div style="position:absolute;left:0;top:0;width:86px;height:79px;background:radial-gradient(ellipse 40px 32px at 100% 0%, rgba(54,22,104,1) 0%, rgba(46,20,86,0.85) 35%, rgba(30,22,50,0) 100%),radial-gradient(ellipse 52px 46px at 106% 106%, rgba(36,100,52,1) 0%, rgba(30,85,52,0.8) 40%, rgba(24,60,50,0) 100%),radial-gradient(ellipse 30px 26px at 90% 42%, rgba(20,24,26,0.95) 0%, rgba(20,26,28,0) 100%),radial-gradient(ellipse 72px 32px at 25% 0%, rgba(18,22,34,1) 0%, rgba(18,24,38,0.8) 40%, rgba(18,24,38,0) 100%),linear-gradient(90deg, #0d2f5e 0%, #0f3a63 25%, #144050 55%, #17463f 100%)"></div><svg style="left:0;top:0" width="86" height="79"><g transform="translate(42 37) rotate(45)" fill="none" stroke="#979797" stroke-width="6.2"><path d="M15 3.2 L15 5 A10 10 0 0 1 5 15 L-5 15 A10 10 0 0 1 -15 5 L-15 -5 A10 10 0 0 1 -5 -15 L5 -15 A10 10 0 0 1 15 -5 L15 -4.4"/><rect x="-5.7" y="-5.7" width="11.4" height="11.4" rx="2.6" fill="#979797" stroke="none"/></g></svg><div style="position:absolute;left:1059px;top:0;width:2px;height:2006px;background:#d9dce5"></div><svg style="left:0;top:0" width="3028" height="2006"><path d="M0 1998 A20 20 0 0 0 8.5 2006 L0 2006 Z" fill="#dedede"/><path d="M3028 1997 A20 20 0 0 1 3019 2006 L3028 2006 Z" fill="#14181a"/></svg>
</div>
</body></html>
